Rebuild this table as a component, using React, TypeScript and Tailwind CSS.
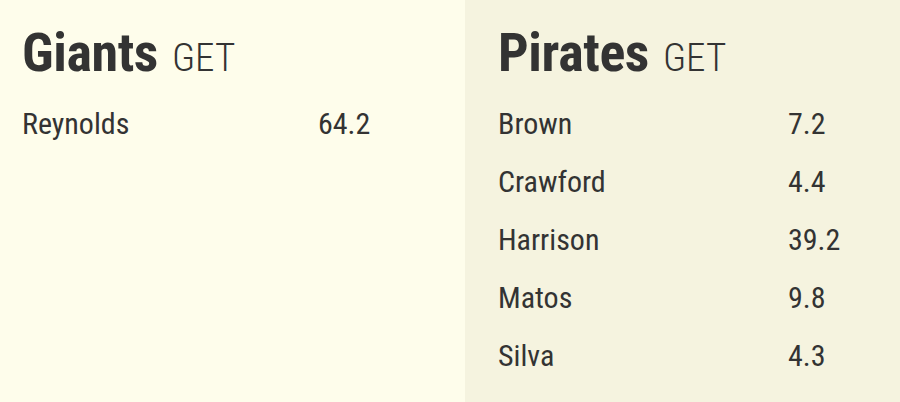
import React from "react";

const giants = [{ n: "Reynolds", v: "64.2" }];
const pirates = [
  { n: "Brown", v: "7.2" },
  { n: "Crawford", v: "4.4" },
  { n: "Harrison", v: "39.2" },
  { n: "Matos", v: "9.8" },
  { n: "Silva", v: "4.3" },
];

function Col({ team, rows, cls, pad, numX }: { team: string; rows: { n: string; v: string }[]; cls: string; pad: string; numX: string }) {
  return (
    <div className={`${cls} ${pad} pt-[18px]`}>
      <h2 className="flex items-baseline gap-[14px] leading-[70px]">
        <span className="text-[54px] font-bold tracking-[-0.4px]">{team}</span>
        <span className="text-[39px] font-light">GET</span>
      </h2>
      <div className="mt-[1px] flex flex-col">
        {rows.map((r) => (
          <div key={r.n} className="flex h-[58px] items-center text-[30px]">
            <span className={numX}>{r.n}</span>
            <span>{r.v}</span>
          </div>
        ))}
      </div>
    </div>
  );
}

export default function App() {
  return (
    <div
      className="flex h-[402px] w-[900px] text-[#333333] [font-stretch:75%]"
      style={{ fontFamily: "'Roboto Condensed', Roboto, 'Liberation Sans', sans-serif" }}
    >
      <Col team="Giants" rows={giants} cls="w-[465px] bg-[#fefdeb]" pad="pl-[22px]" numX="w-[296px]" />
      <Col team="Pirates" rows={pirates} cls="flex-1 bg-[#f5f3df]" pad="pl-[33px]" numX="w-[290px]" />
    </div>
  );
}
